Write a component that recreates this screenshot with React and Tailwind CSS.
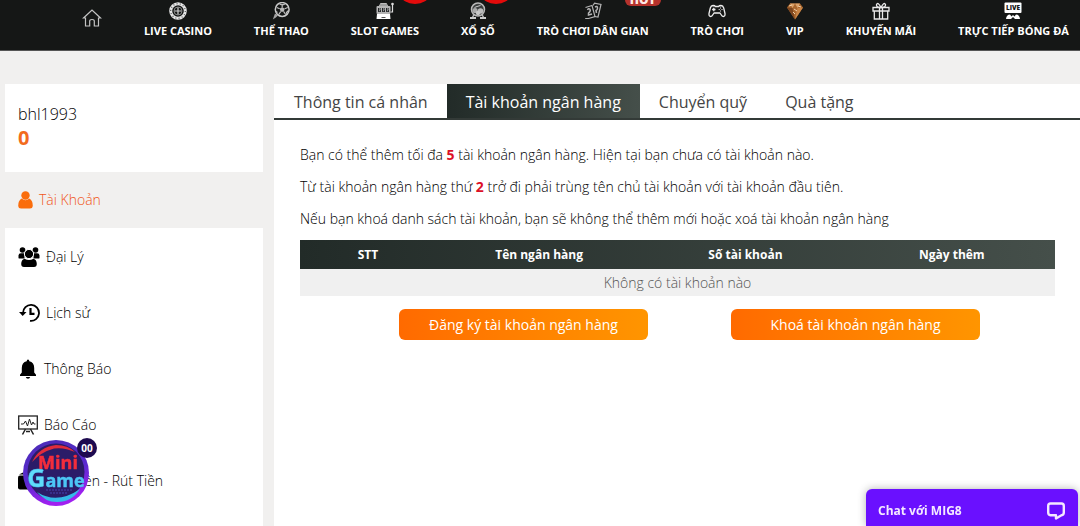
import React, { useState } from 'react'

const HomeIcon = () => (
  <svg viewBox="0 0 20 20" className="w-5 h-5" fill="none" stroke="#c4c4c4" strokeWidth="1.2">
    <path d="M1.5 10 L10 2 L18.500 10 H16.500 V18 H12.300 V13 Q12.300 11.500 10 11.500 Q7.700 11.500 7.700 13 V18 H3.500 V10 Z" />
  </svg>
)

const CasinoIcon = () => (
  <svg viewBox="0 0 18 18" className="w-[18px] h-[18px]" fill="none">
    <circle cx="9" cy="9" r="7.300" stroke="#e6e6e6" strokeWidth="3" />
    <circle cx="9" cy="9" r="7.300" stroke="#55595a" strokeWidth="1.200" strokeDasharray="1 2.270" />
    <circle cx="9" cy="9" r="4" stroke="#9a9d9d" strokeWidth="0.800" />
    <path d="M9 5.500V12.500M5.500 9H12.500" stroke="#d0d0d0" strokeWidth="1.200" />
  </svg>
)

const SportIcon = () => (
  <svg viewBox="0 0 18 18" className="w-[18px] h-[18px]" fill="none">
    <circle cx="10.200" cy="7.500" r="6.900" stroke="#c9c9c9" strokeWidth="1.500" />
    <path d="M10.200 5 L12.700 6.800 L11.700 9.700 H8.700 L7.700 6.800Z" fill="#b9b9b9" />
    <path d="M10.200 5V2M12.700 6.800L15.800 5.500M11.700 9.700L13.700 12.500M8.700 9.700L6.700 12.500M7.700 6.800L4.700 5.500M7.500 2L10.200 3L13 2M16.500 8.500L14.500 10.500L15 12M4 9.500L5.500 10.500" stroke="#c0c0c0" strokeWidth="1.200" />
    <path d="M3 11.500L0.800 17.500L3.800 15.500L6 13.500Z" fill="#a3a3a3" />
  </svg>
)

const SlotIcon = () => (
  <svg viewBox="0 0 18 18" className="w-[18px] h-[18px]">
    <path d="M2.500 4.500 L4.500 1 H10.500 L12.500 4.500Z" fill="#bdbdbd" />
    <path d="M4.500 3H11" stroke="#25282a" strokeWidth="0.800" strokeDasharray="1 1" />
    <rect x="0.500" y="4" width="14" height="8" rx="1" fill="#b5b5b5" />
    <path d="M2 6h3v4h-3zM6 6h3v4h-3zM10 6h3v4h-3z" fill="#25282a" />
    <path d="M3 6.800h1.300l-1 2.500M7 6.800h1.300l-1 2.500M11 6.800h1.300l-1 2.500" stroke="#d8d8d8" strokeWidth="0.700" fill="none" />
    <path d="M1 12h13l0.500 5h-14z" fill="#fff" />
    <path d="M5.500 15.500h4" stroke="#555" strokeWidth="1" />
    <path d="M14.500 10h2v-8" stroke="#ddd" strokeWidth="1.200" fill="none" />
    <circle cx="16.500" cy="2" r="1.300" fill="#ddd" />
  </svg>
)

const LottoIcon = () => (
  <svg viewBox="0 0 18 18" className="w-[18px] h-[18px]" fill="none">
    <circle cx="9" cy="7.500" r="6.500" fill="#3c3f3f" stroke="#b9b9b9" strokeWidth="1.500" />
    <circle cx="6" cy="8.500" r="2.600" fill="#aaa" />
    <circle cx="11.500" cy="9" r="2.800" fill="#bbb" />
    <circle cx="9" cy="11" r="2.200" fill="#c8c8c8" />
    <path d="M5.500 5.500L8 4.500L11.500 3.500" stroke="#ccc" />
    <path d="M5 13L3.500 15M13 13L14.500 15" stroke="#bbb" strokeWidth="1.300" />
    <path d="M1 16h6M11 16h6" stroke="#ccc" strokeWidth="2" />
  </svg>
)

const CardsIcon = () => (
  <svg viewBox="0 0 18 18" className="w-[18px] h-[18px]" fill="none" stroke="#b4b4b4" strokeWidth="1.200">
    <path d="M9 3.500 L10.500 1.200 L17 2.500 L14 15 L10.500 14.500" />
    <path d="M1.500 5.500 L8 3.500 L11 14.500 L4.500 16.500 H1.200" />
    <path d="M3.500 8 Q4.500 6 6 7.300 Q7 9 4.500 11 L4.500 13 L8 12M11 5Q13.500 3.500 13.500 6Q13.500 8 12 8.500L12.500 11" strokeWidth="1.500" />
  </svg>
)

const GamepadIcon = () => (
  <svg viewBox="0 0 18 18" className="w-[18px] h-[18px]" fill="none" stroke="#eee" strokeWidth="1.300" strokeLinejoin="round">
    <path d="M5 3.500 Q7 3.500 7.300 4.500 H10.700 Q11 3.500 13 3.500 Q15 3.700 15.700 6 L17 11.500 Q17.300 14.500 15.300 14.500 Q14 14.500 13 12.500 L12 11 H6 L5 12.500 Q4 14.500 2.700 14.500 Q0.700 14.500 1 11.500 L2.300 6 Q3 3.700 5 3.500Z" />
    <path d="M5.800 5.800V9.200M4.100 7.500H7.500" />
    <path d="M12.500 5.500v1M12.500 8.500v1M10.700 7.500h1M13.500 7.500h1" strokeWidth="1.100" />
  </svg>
)

const VipIcon = () => (
  <svg viewBox="0 0 18 18" className="w-[18px] h-[18px]">
    <path d="M1 5.500L4 1.500H14L17 5.500L9 17.500Z" fill="#a9672e" />
    <path d="M4 1.500L6.500 6L9 1.500L11.500 6L14 1.500" fill="#dca268" />
    <path d="M1 5.500L6.500 6L9 17.500Z" fill="#7c451e" />
    <path d="M17 5.500L11.500 6L9 17.500Z" fill="#c98546" />
    <path d="M3 4L6 3M8 7L11 9M12 4L15 5M7 10L9 12" stroke="#f1d3ae" strokeWidth="1" />
  </svg>
)

const GiftIcon = () => (
  <svg viewBox="0 0 18 18" className="w-[18px] h-[18px]" fill="none" stroke="#e9e9e9" strokeWidth="1.300">
    <path d="M1 5.500H17V9H1ZM2.300 9V17H15.700V9M7.500 5.500V17M10.500 5.500V17" />
    <path d="M9 5.500Q4 5.500 4.500 2.500Q6 -0.500 9 5.500Q12 -0.500 13.500 2.500Q14 5.500 9 5.500" />
  </svg>
)

const LiveIcon = () => (
  <svg viewBox="0 0 18 18" className="w-[18px] h-[18px]">
    <rect x="0.500" y="0.500" width="17" height="10.500" rx="1" fill="#fff" />
    <text x="9" y="8.200" textAnchor="middle" fontFamily="Open Sans" fontWeight="800" fontSize="6.500" fill="#151716">LIVE</text>
    <path d="M2 17 Q2.500 12.500 6 12.500 L7.500 14.500 L9 13 L10.500 14.500 L12 12.500 Q15.500 12.500 16 17Z" fill="#fff" />
    <path d="M7 17L9 15L11 17Z" fill="#151716" />
  </svg>
)

const UserIcon = () => (
  <svg viewBox="0 0 15 18" className="w-[15px] h-[18px]" fill="#fa6d0c">
    <circle cx="7.500" cy="4.500" r="4.200" />
    <path d="M3.700 7.500 Q7.500 11 11.300 7.500 Q15 9.500 14.800 15 Q14.600 17.500 12 17.500 H3 Q0.400 17.500 0.200 15 Q0 9.500 3.700 7.500Z" />
  </svg>
)

const AgentIcon = () => (
  <svg viewBox="0 0 22 20" className="w-[22px] h-5">
    <circle cx="4.500" cy="3" r="2.800" />
    <circle cx="17.500" cy="3" r="2.800" />
    <path d="M0.500 11V8.500Q0.500 6.300 3 6.300H6.500V11.500H2Q0.500 11.500 0.500 11ZM21.500 11V8.500Q21.500 6.300 19 6.300H15.500V11.500H20Q21.500 11.500 21.500 11Z" />
    <circle cx="11" cy="7" r="4.600" stroke="#fff" />
    <path d="M6.500 11.700Q11 14.500 15.500 11.700Q18.800 12.800 18.800 17Q18.800 20 16 20H6Q3.200 20 3.200 17Q3.200 12.800 6.500 11.700Z" />
  </svg>
)

const HistoryIcon = () => (
  <svg viewBox="0 0 22 20" className="w-[22px] h-5" fill="none" stroke="#000" strokeWidth="1.800">
    <path d="M5 10A8 8 0 1 1 12 17.900" />
    <path d="M12.500 5V10.800H16.500" strokeWidth="2.200" />
    <path d="M1 9H8.500L4.700 13Z" fill="#000" stroke="none" />
  </svg>
)

const BellIcon = () => (
  <svg viewBox="0 0 20 20" className="w-5 h-5">
    <path d="M10 0.500Q11.300 0.500 11.300 2.300Q16.200 3.500 16.200 9V13.500L18 15.800V17H2V15.800L3.800 13.500V9Q3.800 3.500 8.700 2.300Q8.700 0.500 10 0.500Z" />
    <path d="M7.800 18H12.200Q11.800 19.800 10 19.800Q8.200 19.800 7.800 18Z" />
  </svg>
)

const ReportIcon = () => (
  <svg viewBox="0 0 20 20" className="w-5 h-5" fill="none" stroke="#222" strokeWidth="1.300">
    <rect x="0.700" y="1" width="18.600" height="13" />
    <path d="M3 9H5.500L7.500 6L9.500 11L11.500 4L13.500 10L15 7L16 9H17.500" strokeWidth="1" />
    <path d="M7.500 14L4.500 19.500M12.500 14L15.500 19.500M8 16.500H12" strokeWidth="1.500" />
  </svg>
)

const WalletIcon = () => (
  <svg viewBox="0 0 20 18" className="w-5 h-[18px]">
    <path d="M1 2.500L5 0.500L6 2.500Z" />
    <rect x="0" y="3.500" width="20" height="14" rx="2" />
  </svg>
)

const MiniGameLogo = () => (
  <svg viewBox="0 0 68 68" className="w-[68px] h-[68px]" role="img" aria-label="Mini Game">
    <defs>
      <linearGradient id="ring" x1="0" y1="0" x2="0.300" y2="1">
        <stop offset="0" stopColor="#4a2bb4" />
        <stop offset="0.600" stopColor="#5a2ad0" />
        <stop offset="1" stopColor="#a020f0" />
      </linearGradient>
    </defs>
    <circle cx="34" cy="34" r="33" fill="url(#ring)" />
    <circle cx="34" cy="33" r="28.500" fill="#2b1c68" />
    <path d="M10 23 Q17 8 34 6 Q46 6 53 13 Q42 8 32 9.500 Q19 13 10 23Z" fill="#e02c3c" />
    <path d="M15 53Q35 66 58 50Q50 63 35 63Q23 63 15 53Z" fill="#35b9e8" />
    <path d="M24 51H50M28 54H46" stroke="#3d3796" strokeWidth="1.500" strokeDasharray="2 1" />
    <g fontFamily="Open Sans" fontWeight="700">
      <text x="36" y="30" textAnchor="middle" fontSize="18" fill="#f32d3c" stroke="#f32d3c" strokeWidth="0.500">Mini</text>
      <text x="34" y="48" textAnchor="middle" fontSize="18" fill="#4cc6f5" stroke="#4cc6f5" strokeWidth="0.500">
        <tspan fontSize="25" fill="#5fdcfa">G</tspan>ame
      </text>
    </g>
  </svg>
)

const ChatIcon = () => (
  <svg viewBox="0 0 20 20" className="w-5 h-5" fill="none" stroke="#f4e9ff" strokeWidth="2.400" strokeLinejoin="round">
    <path d="M4.500 2.500H15.500Q17.800 2.500 17.800 5V11.500Q17.800 14 15.500 14.300L10 17.500V14.300H4.500Q2.200 14 2.200 11.500V5Q2.200 2.500 4.500 2.500Z" />
  </svg>
)

const navItems = [
  { name: 'LIVE CASINO', icon: <CasinoIcon /> },
  { name: 'THỂ THAO', icon: <SportIcon /> },
  { name: 'SLOT GAMES', icon: <SlotIcon />, badge: 'red', badgePos: 'ml-4' },
  { name: 'XỔ SỐ', icon: <LottoIcon />, badge: 'red', badgePos: 'ml-1' },
  { name: 'TRÒ CHƠI DÂN GIAN', icon: <CardsIcon />, badge: 'hot' },
  { name: 'TRÒ CHƠI', icon: <GamepadIcon /> },
  { name: 'VIP', icon: <VipIcon /> },
  { name: 'KHUYẾN MÃI', icon: <GiftIcon /> },
  { name: 'TRỰC TIẾP BÓNG ĐÁ', icon: <LiveIcon /> },
]

const menuItems = [
  { name: 'Đại Lý', icon: <AgentIcon /> },
  { name: 'Lịch sử', icon: <HistoryIcon /> },
  { name: 'Thông Báo', icon: <BellIcon /> },
  { name: 'Báo Cáo', icon: <ReportIcon /> },
  { name: 'Nạp Tiền - Rút Tiền', icon: <WalletIcon /> },
]

const tabs = ['Thông tin cá nhân', 'Tài khoản ngân hàng', 'Chuyển quỹ', 'Quà tặng']

const Header = () => (
  <header className="bg-[#151716] border-b border-[#555] overflow-hidden">
    <nav className="flex justify-between pl-[82px] pr-[11px] pt-0.5 pb-[11px]">
      <a href="#" aria-label="Home" className="pt-1.5"><HomeIcon /></a>
      {navItems.map((item) => (
        <a href="#" key={item.name} className="relative flex flex-col items-center gap-[3px] text-[11px] leading-4 font-bold text-white whitespace-nowrap">
          {item.icon}
          <span>{item.name}</span>
          {item.badge === 'red' && (
            <span className={`absolute left-1/2 -top-4 w-7 h-[18px] rounded-[50%] bg-[#e30b0b] ${item.badgePos}`}></span>
          )}
          {item.badge === 'hot' && (
            <span className="absolute left-1/2 -top-2 ml-8 w-9 h-3 rounded-b-md bg-[#b5322c] text-center text-xs leading-3 font-extrabold text-[#ffe9e4]">HOT</span>
          )}
        </a>
      ))}
    </nav>
  </header>
)

const Sidebar = () => (
  <aside className="w-[258px] shrink-0 flex flex-col">
    <div className="h-[88px] bg-white px-[13px] pt-[18px]">
      <p className="text-base leading-6 font-light text-black">bhl1993</p>
      <p className="text-xl leading-6 font-bold text-[#f26b1d]">0</p>
    </div>
    <a href="#" className="h-14 px-[13px] flex items-center gap-1.5 text-sm font-light text-[#f0561a]">
      <UserIcon />
      Tài Khoản
    </a>
    <div className="flex-1 bg-white">
      {menuItems.map((item) => (
        <a href="#" key={item.name} className="h-14 px-[13px] pt-px flex items-center gap-1.5 text-sm font-light text-black">
          {item.icon}
          {item.name}
        </a>
      ))}
    </div>
  </aside>
)

const BankAccounts = () => (
  <div className="pl-[26px] pr-[25px] pt-[19px] text-black">
    <div className="flex flex-col text-sm leading-8 font-light">
      <p>Bạn có thể thêm tối đa <b className="font-bold text-[#dc1028]">5</b> tài khoản ngân hàng. Hiện tại bạn chưa có tài khoản nào.</p>
      <p>Từ tài khoản ngân hàng thứ <b className="font-bold text-[#dc1028]">2</b> trở đi phải trùng tên chủ tài khoản với tài khoản đầu tiên.</p>
      <p>Nếu bạn khoá danh sách tài khoản, bạn sẽ không thể thêm mới hoặc xoá tài khoản ngân hàng</p>
    </div>

    <table className="w-full mt-[5px] table-fixed text-center">
      <thead className="bg-linear-to-r from-[#222b28] to-[#454f4a] text-white">
        <tr className="h-[29px] text-xs">
          <th className="w-[18%]">STT</th>
          <th>Tên ngân hàng</th>
          <th>Số tài khoản</th>
          <th>Ngày thêm</th>
        </tr>
      </thead>
      <tbody>
        <tr className="h-[27px] bg-[#f0f0f0] text-sm font-light text-[#555]">
          <td colSpan="4">Không có tài khoản nào</td>
        </tr>
      </tbody>
    </table>

    <div className="mt-[13px] pl-6 flex justify-center gap-[83px] text-sm text-white">
      <button className="w-[249px] h-[31px] rounded-md bg-linear-to-r from-[#ff6a00] to-[#ff9500]">Đăng ký tài khoản ngân hàng</button>
      <button className="w-[249px] h-[31px] rounded-md bg-linear-to-r from-[#ff6a00] to-[#ff9500]">Khoá tài khoản ngân hàng</button>
    </div>
  </div>
)

const App = () => {
  const [activeTab, setActiveTab] = useState('Tài khoản ngân hàng')

  return (
    <div className="min-h-screen flex flex-col bg-[#f1f0ef] font-['Open_Sans',sans-serif]">
      <Header />
      <div className="flex-1 flex gap-[11px] pl-[5px] pt-[33px]">
        <Sidebar />
        <main className="flex-1 bg-white">
          <div className="flex pl-px border-b-2 border-[#333a37]">
            {tabs.map((tab) => (
              <button
                key={tab}
                onClick={() => setActiveTab(tab)}
                className={
                  tab === activeTab
                    ? 'h-[34px] pt-0.5 px-[19px] text-base text-white bg-linear-to-r from-[#222b28] to-[#454f4a]'
                    : 'h-[34px] pt-0.5 px-[19px] text-base text-[#444]'
                }
              >
                {tab}
              </button>
            ))}
          </div>
          <BankAccounts />
        </main>
      </div>

      {/* Mini game */}
      <button className="fixed left-[22px] bottom-[19px]">
        <MiniGameLogo />
        <span className="absolute -top-px -right-[7px] w-5 h-5 rounded-full bg-[#1e0a50] text-[10px] leading-5 font-bold text-white">00</span>
      </button>

      {/* Live chat */}
      <button className="fixed right-0.5 bottom-0 w-[212px] h-[37px] px-3 pt-1.5 flex items-center justify-between rounded-t-md bg-[#6a10ff] text-xs font-bold text-[#f4e9ff] shadow-[0_0_8px_rgba(0,0,0,0.3)]">
        Chat với MIG8
        <ChatIcon />
      </button>
    </div>
  )
}

export default App
